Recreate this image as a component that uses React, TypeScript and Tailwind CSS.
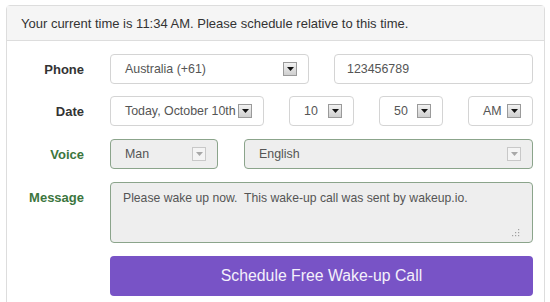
import React from "react";

// little windows-style dropdown arrow box
function ArrowBox({ disabled = false }: { disabled?: boolean }) {
  return (
    <span
      className={`flex h-[14px] w-[14px] shrink-0 items-center justify-center border ${
        disabled
          ? "border-[#c8c8c8] bg-[#f4f4f4]"
          : "border-[#9a9a9a] bg-gradient-to-b from-[#f2f2f2] to-[#cfcfcf]"
      }`}
    >
      <svg width="7" height="4" viewBox="0 0 7 4">
        <path d="M0 0h7L3.5 4z" fill={disabled ? "#a8a8a8" : "#111"} />
      </svg>
    </span>
  );
}

function Select({
  value,
  width,
  disabled = false,
}: {
  value: string;
  width: string;
  disabled?: boolean;
}) {
  return (
    <div
      className={`flex h-[30px] items-center rounded-[4px] border pl-[14px] pr-[11px] ${width} ${
        disabled ? "border-[#8ba48b] bg-[#eeeeee]" : "border-[#d4d4d4] bg-white"
      }`}
    >
      <span className="min-w-0 flex-1 whitespace-nowrap text-[12.4px] text-[#555]">{value}</span>
      <ArrowBox disabled={disabled} />
    </div>
  );
}

function Row({ label, green = false, children }: { label: string; green?: boolean; children: React.ReactNode }) {
  return (
    <div className="flex items-start">
      <div
        className={`w-[77px] shrink-0 pt-[6px] text-right text-[13px] font-bold ${
          green ? "text-[#3c763d]" : "text-[#333]"
        }`}
      >
        {label}
      </div>
      <div className="ml-[26px] flex w-[423px] items-center justify-between">{children}</div>
    </div>
  );
}

export default function App() {
  return (
    <div className="h-[302px] w-[550px] overflow-hidden bg-white pl-[6px] pt-[5px] font-['Liberation_Sans',Arial,sans-serif]">
      <div className="h-[320px] w-[539px] rounded-t-[4px] border border-[#dddddd]">
        {/* Header */}
        <div className="flex h-[35px] items-center border-b border-[#dddddd] bg-[#f5f5f5] pl-[14px] pt-[1px] text-[13px] text-[#333]">
          Your current time is 11:34 AM. Please schedule relative to this time.
        </div>

        {/* Form */}
        <div className="flex flex-col gap-[13px] pt-[13px]">
          <Row label="Phone">
            <Select value="Australia (+61)" width="w-[199px]" />
            <div className="flex h-[30px] w-[199px] items-center rounded-[4px] border border-[#d4d4d4] pl-[12px] text-[12.4px] text-[#555]">
              123456789
            </div>
          </Row>

          <div className="-mt-[1px]">
            <Row label="Date">
              <Select value="Today, October 10th" width="w-[154px]" />
              <Select value="10" width="w-[65px]" />
              <Select value="50" width="w-[64px]" />
              <Select value="AM" width="w-[65px]" />
            </Row>
          </div>

          <Row label="Voice" green>
            <Select value="Man" width="w-[108px]" disabled />
            <Select value="English" width="w-[289px]" disabled />
          </Row>

          <Row label="Message" green>
            <div className="flex h-[61px] w-[423px] flex-col justify-between rounded-[4px] border border-[#8ba48b] bg-[#eeeeee] pb-[5px] pl-[12px] pr-[12px] pt-[6px]">
              <span className="whitespace-pre text-[12.2px] text-[#555]">
                Please wake up now.  This wake-up call was sent by wakeup.io.
              </span>
              <svg className="self-end" width="9" height="9" viewBox="0 0 9 9">
                <g fill="#a0a0a0">
                  <rect x="7" y="1" width="1.2" height="1.2" />
                  <rect x="4" y="4" width="1.2" height="1.2" />
                  <rect x="7" y="4" width="1.2" height="1.2" />
                  <rect x="1" y="7" width="1.2" height="1.2" />
                  <rect x="4" y="7" width="1.2" height="1.2" />
                  <rect x="7" y="7" width="1.2" height="1.2" />
                </g>
              </svg>
            </div>
          </Row>

          <div className="pl-[103px]">
            <button className="flex h-[40px] w-[423px] items-center justify-center rounded-[4px] bg-[#7853c6] text-[15.8px] text-[#f4f0fb]">
              Schedule Free Wake-up Call
            </button>
          </div>
        </div>
      </div>
    </div>
  );
}
